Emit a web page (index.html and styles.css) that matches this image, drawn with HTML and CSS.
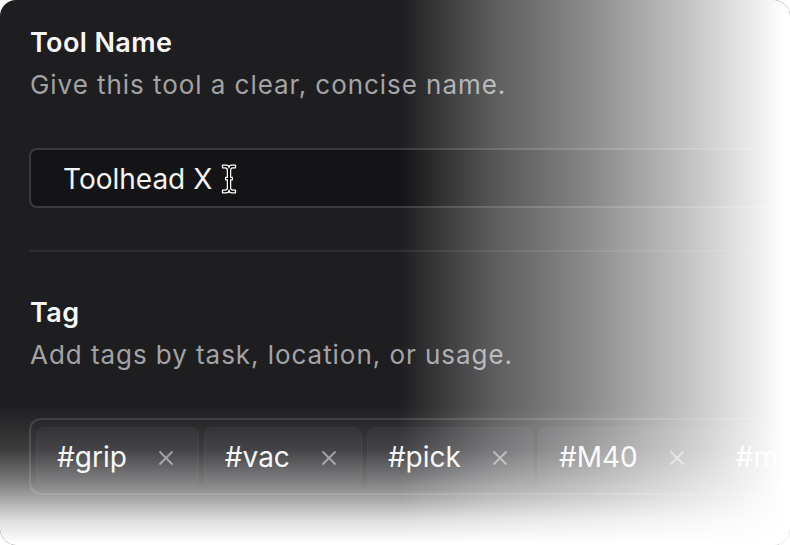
FILE: index.html
```html
<!DOCTYPE html>
<html lang="en">
<head>
<meta charset="utf-8">
<title>Tool settings</title>
<link rel="stylesheet" href="styles.css">
</head>
<body>
<div class="panel">
  <section class="field">
    <h2 class="field-title">Tool Name</h2>
    <p class="field-desc">Give this tool a clear, concise name.</p>
    <div class="input">
      <span class="input-text">Toolhead X</span>
      <svg class="ibeam" width="16" height="30" viewBox="0 0 16 30" aria-hidden="true">
        <path d="M1.5 1.2H5Q8 1.2 8 3.8Q8 1.2 11 1.2H14.5V3.8H11.8Q9.6 3.8 9.6 6.2V13.4H11.4V15.8H9.6V23.8Q9.6 26.2 11.8 26.2H14.5V28.8H11Q8 28.8 8 26.2Q8 28.8 5 28.8H1.5V26.2H4.2Q6.4 26.2 6.4 23.8V15.8H4.6V13.4H6.4V6.2Q6.4 3.8 4.2 3.8H1.5Z" fill="#000" stroke="#fff" stroke-width="1.3" stroke-linejoin="round"/>
      </svg>
    </div>
  </section>
  <hr class="divider">
  <section class="field">
    <h2 class="field-title">Tag</h2>
    <p class="field-desc">Add tags by task, location, or usage.</p>
    <div class="tags">
      <span class="chip">#grip<svg class="x" width="16" height="16" viewBox="0 0 16 16"><path d="M1.5 1.5L14.5 14.5M14.5 1.5L1.5 14.5"/></svg></span>
      <span class="chip">#vac<svg class="x" width="16" height="16" viewBox="0 0 16 16"><path d="M1.5 1.5L14.5 14.5M14.5 1.5L1.5 14.5"/></svg></span>
      <span class="chip">#pick<svg class="x" width="16" height="16" viewBox="0 0 16 16"><path d="M1.5 1.5L14.5 14.5M14.5 1.5L1.5 14.5"/></svg></span>
      <span class="chip">#M40<svg class="x" width="16" height="16" viewBox="0 0 16 16"><path d="M1.5 1.5L14.5 14.5M14.5 1.5L1.5 14.5"/></svg></span>
      <span class="chip">#ma</span>
    </div>
  </section>
  <div class="fade-x"></div>
  <div class="fade-y"></div>
</div>
</body>
</html>
```

FILE: styles.css
```css
html, body {
  margin: 0;
  padding: 0;
  background: #ffffff;
}
body {
  font-family: Inter, "Noto Sans", sans-serif;
  width: 790px;
  height: 545px;
  overflow: hidden;
}
.panel {
  position: relative;
  box-sizing: border-box;
  width: 790px;
  height: 545px;
  background: #1e1e20;
  border-radius: 16px;
  padding: 27px 0 0 29px;
  overflow: hidden;
}
.field {
  display: flex;
  flex-direction: column;
}
.field-title {
  margin: 0;
  font-size: 27px;
  letter-spacing: 0.4px;
  line-height: 32px;
  font-weight: 600;
  color: #f7f7f7;
  padding-left: 1px;
}
.field-desc {
  margin: 10px 0 0;
  font-size: 26px;
  letter-spacing: 0.95px;
  line-height: 32px;
  font-weight: 400;
  color: #a3a3a6;
  padding-left: 1px;
}
.input {
  margin-top: 47px;
  box-sizing: border-box;
  height: 60px;
  border: 2px solid #3a3a3d;
  border-right: none;
  border-radius: 8px 0 0 8px;
  background: #141416;
  display: flex;
  align-items: center;
  padding-left: 32px;
  gap: 9px;
}
.input-text {
  font-size: 28px;
  line-height: 34px;
  color: #f4f4f4;
  padding-top: 2px;
}
.ibeam {
  display: block;
  margin-top: 1px;
}
.divider {
  margin: 42px 0 0;
  border: none;
  height: 2px;
  background: #2e2e31;
}
.divider + .field {
  margin-top: 45px;
}
.tags {
  margin-top: 47px;
  box-sizing: border-box;
  height: 77px;
  border: 2px solid #3a3a3d;
  border-right: none;
  border-radius: 12px 0 0 12px;
  display: flex;
  gap: 5px;
  padding: 7px 0 6px 5px;
  white-space: nowrap;
}
.chip {
  flex: none;
  display: flex;
  align-items: center;
  box-sizing: border-box;
  height: 60px;
  padding: 0 24px 0 20px;
  gap: 31px;
  background: #26262a;
  border: 1px solid #2b2b2f;
  border-radius: 8px;
  font-size: 28px;
  color: #f4f4f4;
}
.x {
  display: block;
  stroke: #8c8c90;
  stroke-width: 2;
  fill: none;
  margin-top: 2px;
}
.fade-x {
  position: absolute;
  inset: 0;
  pointer-events: none;
  background: linear-gradient(to right,
    rgba(255,255,255,0) 400px,
    rgba(255,255,255,0.27) 490px,
    rgba(255,255,255,0.49) 590px,
    rgba(255,255,255,0.74) 690px,
    rgba(255,255,255,0.92) 757px,
    #ffffff 785px);
}
.fade-y {
  position: absolute;
  inset: 0;
  pointer-events: none;
  background: linear-gradient(to bottom,
    rgba(255,255,255,0) 405px,
    rgba(255,255,255,0.06) 425px,
    rgba(255,255,255,0.14) 450px,
    rgba(255,255,255,0.4) 480px,
    rgba(255,255,255,0.62) 500px,
    rgba(255,255,255,0.85) 520px,
    #ffffff 543px);
}
```
